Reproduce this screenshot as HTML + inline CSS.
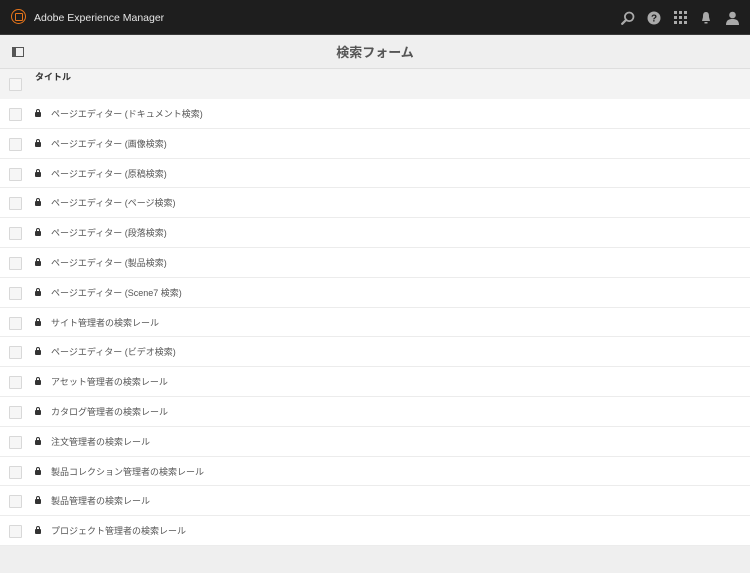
<!DOCTYPE html><html><head><meta charset="utf-8"><style>
body{margin:0;width:750px;height:573px;background:#efefef;font-family:"Liberation Sans","Noto Sans CJK JP",sans-serif;overflow:hidden;position:relative}
.top{height:34px;background:#1e1e1e;border-bottom:1px solid #3a3a3a;position:relative;color:#e6e6e6}
.logo{position:absolute;left:11px;top:9px;width:13px;height:13px;border:1.5px solid #e8751a;border-radius:50%}
.logo:after{content:"";position:absolute;left:3px;top:3px;width:6px;height:6px;border:1px solid #e8751a;border-radius:1px}
.brand{position:absolute;left:34px;top:12px;font-size:10.5px}
.sub{height:33px;background:#efefef;border-bottom:1px solid #dedede;position:relative}
.sub .t{position:absolute;left:0;right:0;top:7px;text-align:center;font-size:13px;font-weight:bold;color:#555}
.th{height:30px;background:#f3f3f3;position:relative}
.cb{position:absolute;left:9px;width:11px;height:11px;border:1px solid #d8d8d8;background:#f6f6f6;border-radius:1px}
.row{height:28.8px;background:#fff;border-bottom:1px solid #ececec;position:relative;font-size:9px;color:#555}
.row .cb{top:9px}
.row .lk{position:absolute;left:35px;top:13px;width:6px;height:5px;background:#333;border-radius:1px}
.row .lk:before{content:"";position:absolute;left:1px;top:-3px;width:2px;height:3px;border:1px solid #333;border-bottom:none;border-radius:2px 2px 0 0}
.row span{position:absolute;left:51px;top:8px}
.ic{position:absolute;top:11px;fill:#aaa}
</style></head><body>
<div class="top"><div class="logo"></div><div class="brand">Adobe Experience Manager</div>
<svg class="ic" style="left:621px" width="14" height="14" viewBox="0 0 14 14"><circle cx="8.2" cy="5.8" r="4.3" fill="none" stroke="#aaa" stroke-width="1.8"/><path d="M5.2 8.8 L1.2 12.8" stroke="#aaa" stroke-width="2.2" stroke-linecap="round"/></svg>
<svg class="ic" style="left:647px" width="14" height="14" viewBox="0 0 14 14"><circle cx="7" cy="7" r="6.5"/><text x="7" y="10.5" font-size="10" font-weight="bold" text-anchor="middle" fill="#1e1e1e" font-family="Liberation Sans">?</text></svg>
<svg class="ic" style="left:674px" width="13" height="13" viewBox="0 0 13 13"><g><rect x="0" y="0" width="3" height="3"/><rect x="5" y="0" width="3" height="3"/><rect x="10" y="0" width="3" height="3"/><rect x="0" y="5" width="3" height="3"/><rect x="5" y="5" width="3" height="3"/><rect x="10" y="5" width="3" height="3"/><rect x="0" y="10" width="3" height="3"/><rect x="5" y="10" width="3" height="3"/><rect x="10" y="10" width="3" height="3"/></g></svg>
<svg class="ic" style="left:700px" width="12" height="14" viewBox="0 0 12 14"><path d="M6 1 C3 1 3 4 3 6 L2 10 L10 10 L9 6 C9 4 9 1 6 1Z M4.5 11 h3 v1.5 h-3z"/></svg>
<svg class="ic" style="left:726px" width="13" height="14" viewBox="0 0 13 14"><circle cx="6.5" cy="4" r="3.3"/><path d="M0 14 C0 9 3 8 6.5 8 C10 8 13 9 13 14Z"/></svg>
</div>
<div class="sub"><svg style="position:absolute;left:12px;top:12px" width="12" height="10"><rect x="0.5" y="0.5" width="11" height="9" fill="none" stroke="#555"/><rect x="1" y="1" width="3" height="8" fill="#555"/></svg><div class="t">検索フォーム</div></div>
<div class="th"><div class="cb" style="top:9px"></div><div style="position:absolute;left:35px;top:1px;font-size:9px;font-weight:bold;color:#333">タイトル</div></div>
<div class="row"><div class="cb"></div><div class="lk"></div><span>ページエディター (ドキュメント検索)</span></div>
<div class="row"><div class="cb"></div><div class="lk"></div><span>ページエディター (画像検索)</span></div>
<div class="row"><div class="cb"></div><div class="lk"></div><span>ページエディター (原稿検索)</span></div>
<div class="row"><div class="cb"></div><div class="lk"></div><span>ページエディター (ページ検索)</span></div>
<div class="row"><div class="cb"></div><div class="lk"></div><span>ページエディター (段落検索)</span></div>
<div class="row"><div class="cb"></div><div class="lk"></div><span>ページエディター (製品検索)</span></div>
<div class="row"><div class="cb"></div><div class="lk"></div><span>ページエディター (Scene7 検索)</span></div>
<div class="row"><div class="cb"></div><div class="lk"></div><span>サイト管理者の検索レール</span></div>
<div class="row"><div class="cb"></div><div class="lk"></div><span>ページエディター (ビデオ検索)</span></div>
<div class="row"><div class="cb"></div><div class="lk"></div><span>アセット管理者の検索レール</span></div>
<div class="row"><div class="cb"></div><div class="lk"></div><span>カタログ管理者の検索レール</span></div>
<div class="row"><div class="cb"></div><div class="lk"></div><span>注文管理者の検索レール</span></div>
<div class="row"><div class="cb"></div><div class="lk"></div><span>製品コレクション管理者の検索レール</span></div>
<div class="row"><div class="cb"></div><div class="lk"></div><span>製品管理者の検索レール</span></div>
<div class="row"><div class="cb"></div><div class="lk"></div><span>プロジェクト管理者の検索レール</span></div>
</body></html>
